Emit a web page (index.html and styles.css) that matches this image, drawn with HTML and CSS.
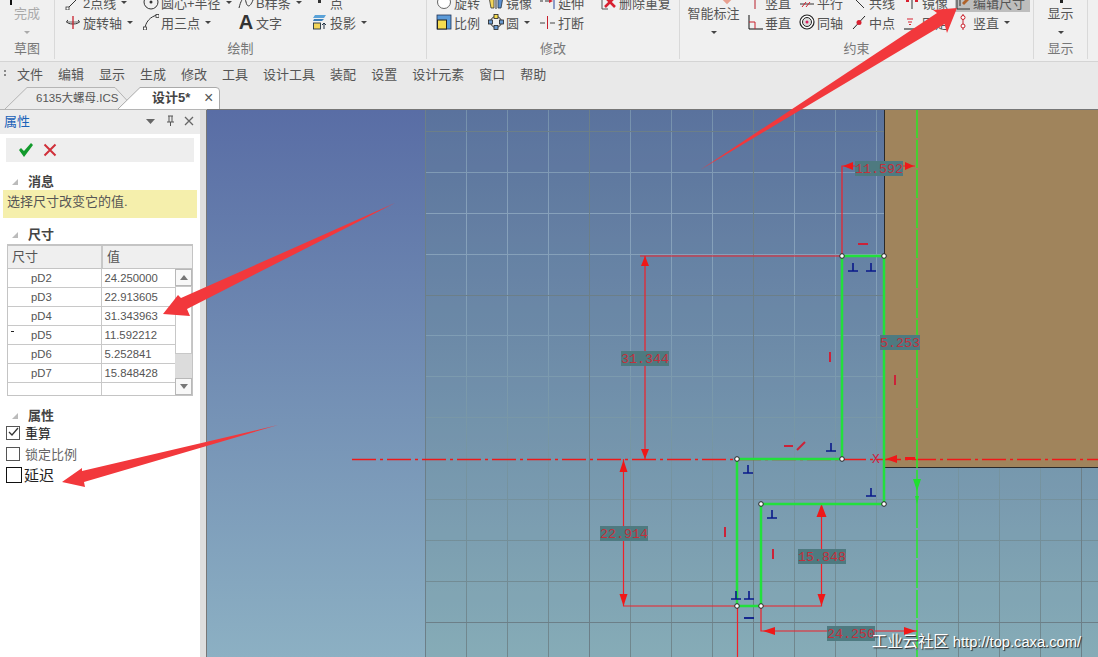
FILE: index.html
```html
<!DOCTYPE html>
<html lang="zh-CN">
<head>
<meta charset="UTF-8" />
<title>CAXA 设计5</title>
<link rel="stylesheet" href="styles.css">
</head>
<body>
  <div class="ribbon">
    <div class="group g-sketch">
      <div class="big-btn off"><span>完成</span><i class="caret"></i></div>
      <div class="group-label">草图</div>
    </div>

    <div class="group g-draw">
      <div class="rows cols-draw">
        <div class="item"><svg class="ico" viewBox="0 0 16 16"><path d="M3 14 14 3" stroke="#333" fill="none"/><rect x="1" y="13" width="3" height="3" fill="#fff" stroke="#333" stroke-width=".8"/></svg>2点线<i class="caret"></i></div>
        <div class="item"><svg class="ico" viewBox="0 0 16 16"><circle cx="8" cy="8" r="7" fill="none" stroke="#333"/><circle cx="8" cy="8" r="1.5" fill="#333"/></svg>圆心+半径<i class="caret"></i></div>
        <div class="item"><svg class="ico" viewBox="0 0 16 16"><path d="M1 14C4 2 7 3 8 8s4 6 7-2" stroke="#333" fill="none"/></svg>B样条<i class="caret"></i></div>
        <div class="item"><svg class="ico" viewBox="0 0 16 16"><rect x="6" y="6" width="3" height="3" fill="#333"/></svg>点</div>
        <div class="item"><svg class="ico" viewBox="0 0 16 16"><path d="M3 6C0 8 3 10 8 10s8-2 5-4" stroke="#333" fill="none"/><path d="M1 8h14" stroke="#333" stroke-width=".7"/><path d="M8 2v13" stroke="#c8202c" stroke-width="1.3"/></svg>旋转轴<i class="caret"></i></div>
        <div class="item"><svg class="ico" viewBox="0 0 16 16"><path d="M2 15C2 9 7 2 15 1" stroke="#333" fill="none"/><rect x="0.5" y="13" width="3" height="3" fill="#fff" stroke="#333" stroke-width=".8"/><rect x="13" y="0.5" width="3" height="3" fill="#fff" stroke="#333" stroke-width=".8"/></svg>用三点<i class="caret"></i></div>
        <div class="item"><span class="big-a">A</span>文字</div>
        <div class="item"><svg class="ico" viewBox="0 0 16 16"><path d="M3 1h11l-2 3H1z" fill="#5aa2d8"/><path d="M2 5h10L10 7H1z" fill="#3b7fb8"/><rect x="1.5" y="9" width="7" height="6" fill="#f3d65a" stroke="#234" stroke-width=".9"/><path d="M12 15V9m-2 2 2-2 2 2" stroke="#234" fill="none"/></svg>投影<i class="caret"></i></div>
      </div>
      <div class="group-label">绘制</div>
    </div>

    <div class="group g-modify">
      <div class="rows cols-modify">
        <div class="item"><svg class="ico" viewBox="0 0 16 16"><circle cx="8" cy="8" r="6.5" fill="#fff" stroke="#666"/></svg>旋转</div>
        <div class="item"><svg class="ico" viewBox="0 0 16 16"><path d="M1 3h5v11H3z" fill="#f3d65a" stroke="#333" stroke-width=".8"/><path d="M10 3h5l-2 11h-3z" fill="#5b8fd0" stroke="#234" stroke-width=".8"/><path d="M8 1v14" stroke="#333"/></svg>镜像</div>
        <div class="item"><svg class="ico" viewBox="0 0 16 16"><path d="M0 7h3m2 0h5" stroke="#333"/><path d="M9 5l4 2-4 2z" fill="#d82030"/><path d="M14 1v14" stroke="#2b4aa0"/></svg>延伸</div>
        <div class="item"><svg class="ico" viewBox="0 0 16 16"><path d="M1 1v14h6" stroke="#555" fill="none"/><path d="M4 3l10 10M14 3 4 13" stroke="#d82030" stroke-width="2.6"/></svg>删除重复</div>
        <div class="item"><svg class="ico" viewBox="0 0 16 16"><rect x="1" y="1" width="14" height="14" fill="#5b9ad8" stroke="#235" stroke-width=".8"/><rect x="1.5" y="6" width="9" height="9" fill="#f6dc50" stroke="#222" stroke-width="1"/></svg>比例</div>
        <div class="item"><svg class="ico" viewBox="0 0 16 16"><circle cx="8" cy="8" r="5.5" fill="none" stroke="#333"/><rect x="6" y="0.5" width="4" height="4" fill="#f6dc50" stroke="#222" stroke-width=".8"/><rect x="0.5" y="6" width="4" height="4" fill="#6a9ad0" stroke="#222" stroke-width=".8"/><rect x="11.5" y="6" width="4" height="4" fill="#6a9ad0" stroke="#222" stroke-width=".8"/><rect x="6" y="11.5" width="4" height="4" fill="#6a9ad0" stroke="#222" stroke-width=".8"/></svg>圆<i class="caret"></i></div>
        <div class="item"><svg class="ico" viewBox="0 0 16 16"><path d="M0 9h5m5 0h5" stroke="#444"/><path d="M7.500 2v13" stroke="#c8202c"/></svg>打断</div>
      </div>
      <div class="group-label">修改</div>
    </div>

    <div class="group g-constraint">
      <div class="big-btn smart"><span>智能标注</span><i class="caret"></i></div>
      <div class="body-side">
        <div class="rows cols-constraint">
          <div class="item"><svg class="ico" viewBox="0 0 16 16"><path d="M8 0v15" stroke="#b8202c"/></svg>竖直</div>
          <div class="item"><svg class="ico" viewBox="0 0 16 16"><path d="M1 10h14" stroke="#333"/><path d="M3 13l4-5m0 5 4-5" stroke="#d82030"/></svg>平行</div>
          <div class="item"><svg class="ico" viewBox="0 0 16 16"><path d="M3 4l10 10" stroke="#333"/></svg>共线</div>
          <div class="item"><svg class="ico" viewBox="0 0 16 16"><path d="M8 0v15" stroke="#333"/><rect x="2" y="3" width="3" height="5" fill="#d82030"/><rect x="11" y="3" width="3" height="5" fill="#d82030"/></svg>镜像</div>
          <div class="item picked"><svg class="ico" viewBox="0 0 16 16"><path d="M2 1v14h13" stroke="#333" fill="none"/><path d="M5 1v11" stroke="#333"/><path d="M7 9l6-6 2 2-6 6z" fill="#b0622a"/></svg>编辑尺寸</div>
          <div class="item"><svg class="ico" viewBox="0 0 16 16"><path d="M2 1v14h14" stroke="#111" fill="none"/><path d="M2 8h6v7" stroke="#c8202c" fill="none"/></svg>垂直</div>
          <div class="item"><svg class="ico" viewBox="0 0 16 16"><circle cx="8" cy="8" r="7" fill="#fff" stroke="#222" stroke-width="1.2"/><circle cx="8" cy="8" r="4.500" fill="#ddd" stroke="#222"/><circle cx="8" cy="8" r="1.500" fill="#d82060"/></svg>同轴</div>
          <div class="item"><svg class="ico" viewBox="0 0 16 16"><path d="M2 15 14 2" stroke="#222"/><circle cx="8" cy="8.500" r="2.500" fill="#d82030"/></svg>中点</div>
          <div class="item"><svg class="ico" viewBox="0 0 16 16"><path d="M0 15h14" stroke="#111"/><path d="M3 5h6M4 8h4M5 10.500h2" stroke="#d82030"/></svg>固定</div>
          <div class="item"><svg class="ico" viewBox="0 0 16 16"><path d="M8 0v16" stroke="#c8202c"/><circle cx="8" cy="3.500" r="2" fill="#fff" stroke="#c8202c"/><circle cx="8" cy="12" r="2" fill="#fff" stroke="#c8202c"/></svg>竖直<i class="caret"></i></div>
        </div>
      </div>
      <div class="group-label">约束</div>
    </div>

    <div class="group g-display">
      <div class="big-btn"><span>显示</span><i class="caret"></i></div>
      <div class="group-label">显示</div>
    </div>
  </div>

  <div class="menubar">
    <span class="grip"></span>
    <span>文件</span><span>编辑</span><span>显示</span><span>生成</span><span>修改</span><span>工具</span><span>设计工具</span><span>装配</span><span>设置</span><span>设计元素</span><span>窗口</span><span>帮助</span>
  </div>

  <div class="tabstrip">
    <div class="tab tab-file">
      <svg class="tab-bg" viewBox="0 0 130 22"><path d="M0 22 22 .5H110L130 22" fill="#ececec" stroke="#b5b5b5"/></svg>
      <span>6135大螺母.ICS</span>
    </div>
    <div class="tab tab-active">
      <svg class="tab-bg" viewBox="0 0 102 22"><path d="M0 22 22 .5H98Q101.500 .5 101.500 4V22" fill="#fff" stroke="#aaa"/></svg>
      <span>设计5*</span><b class="tab-x">×</b>
    </div>
  </div>

  <div class="main">
    <div class="panel">
      <div class="panel-head">
        <span class="panel-title">属性</span>
        <span class="panel-tools">
          <svg width="12" height="12" viewBox="0 0 12 12"><path d="M1 4h9L5.500 9z" fill="#666"/></svg>
          <svg width="12" height="12" viewBox="0 0 12 12"><path d="M4 1h5M5 1v6M8 1v6M3 7h7M6.500 7v4" stroke="#555" fill="none"/></svg>
          <svg width="12" height="12" viewBox="0 0 12 12"><path d="M2 2l8 8M10 2l-8 8" stroke="#666" stroke-width="1.300"/></svg>
        </span>
      </div>

      <div class="okbar">
        <svg width="16" height="16" viewBox="0 0 16 16"><path d="M1 8l2-2 3 3 7-8 2 2-9 12z" fill="#129a2c"/></svg>
        <svg width="14" height="14" viewBox="0 0 14 14"><path d="M1.500 1.500l11 11M12.500 1.500l-11 11" stroke="#d0303a" stroke-width="2"/></svg>
      </div>

      <div class="sec-title sec-msg">消息</div>
      <div class="msg">选择尺寸改变它的值.</div>

      <div class="sec-title sec-dim">尺寸</div>
      <div class="dims">
        <div class="dims-head"><span>尺寸</span><span>值</span></div>
        <div class="dims-body">
          <table class="dims-table">
            <tr><td>pD2</td><td>24.250000</td></tr>
            <tr><td>pD3</td><td>22.913605</td></tr>
            <tr><td>pD4</td><td>31.343963</td></tr>
            <tr class="cur"><td>pD5</td><td>11.592212</td></tr>
            <tr><td>pD6</td><td>5.252841</td></tr>
            <tr><td>pD7</td><td>15.848428</td></tr>
            <tr class="last"><td></td><td></td></tr>
          </table>
          <div class="scroll">
            <div class="sbtn"><i class="up"></i></div>
            <div class="thumb"></div>
            <div class="track"></div>
            <div class="sbtn"><i class="down"></i></div>
          </div>
        </div>
      </div>

      <div class="sec-title sec-prop">属性</div>
      <label class="chk strong"><span class="box on"><svg width="11" height="11" viewBox="0 0 11 11"><path d="M1 5l3 3 6-7" stroke="#333" stroke-width="1.300" fill="none"/></svg></span>重算</label>
      <label class="chk faint"><span class="box"></span>锁定比例</label>
      <label class="chk large"><span class="box"></span>延迟</label>
    </div>

    <div class="splitter"></div>

    <div class="canvas">
      <svg class="sketch" viewBox="207 110 891 547">
        <defs>
          <linearGradient id="minor" gradientUnits="userSpaceOnUse" x1="0" y1="110" x2="0" y2="657">
            <stop offset="0" stop-color="#7590ac"/>
            <stop offset=".2" stop-color="#88a2bc"/>
            <stop offset=".42" stop-color="#7f9db4"/>
            <stop offset=".6" stop-color="#7796a4"/>
            <stop offset="1" stop-color="#70868c"/>
          </linearGradient>
          <path id="perp" d="M-5 4H5M0 4V-4" stroke="#0a1a8a" stroke-width="1.600" fill="none"/>
        </defs>

        <rect x="425" y="110" width="673" height="547" class="grid-tint"/>
        <path stroke="url(#minor)" fill="none" d="M466.500 110V657M507.500 110V657M548.500 110V657M630.500 110V657M671.500 110V657M712.500 110V657M794.500 110V657M835.500 110V657M876.500 110V657M958.500 110V657M999.500 110V657M1040.500 110V657M425 172.500H1098M425 213.500H1098M425 254.500H1098M425 335.500H1098M425 376.500H1098M425 417.500H1098M425 499.500H1098M425 540.500H1098M425 581.500H1098"/>
        <path class="grid-major" d="M425.500 110V657M589.500 110V657M753.500 110V657M1081.500 110V657M425 131.500H1098M425 295.500H1098M425 622.500H1098"/>

        <rect x="885" y="110" width="213" height="357" class="part"/>
        <path class="part-edge" d="M884.500 110V467.500H1098"/>

        <path class="axis-h" d="M352 459.500H1098"/>
        <path class="axis-v" d="M917 110V657"/>

        <path class="dim" d="M842 256V166H915M640 256H842M645 256V459M623.500 459V606M623 606H737M761 606H821.500V504M761 606V631H917M737.500 606V657"/>
        <path class="dim-fill" d="M843 166l10-4v8zM914 166l-9-4v8zM645 256l-4 10h8zM645 459l-4-10h8zM623.500 460l-4 12h8zM623.500 606l-4-12h8zM821.500 504l-5 13h10zM821.500 606l-4-12h8zM763 631l12-4v8zM916 631l-12-4v8zM886 459l11-4v8zM905 457h10v3h-10z"/>
        <path class="mark-green-fill" d="M917 491l-4-12h8zM917 504l-2-8h4z"/>

        <path class="profile" d="M842 256H884V504H761V606H737V459H842Z"/>

        <g class="nodes">
          <circle cx="842" cy="256" r="2.300"/><circle cx="884" cy="256" r="2.300"/>
          <circle cx="737" cy="459" r="2.300"/><circle cx="842" cy="459" r="2.300"/>
          <circle cx="761" cy="504" r="2.300"/><circle cx="884" cy="504" r="2.300"/>
          <circle cx="737" cy="606" r="2.300"/><circle cx="761" cy="606" r="2.300"/>
        </g>

        <use href="#perp" x="853" y="267"/><use href="#perp" x="871" y="267"/>
        <use href="#perp" x="831" y="447"/><use href="#perp" x="748" y="469"/>
        <use href="#perp" x="871" y="492"/><use href="#perp" x="772" y="514"/>
        <use href="#perp" x="736" y="595"/><use href="#perp" x="749" y="595"/>
        <path d="M744 618h10" stroke="#0a1a8a" stroke-width="1.800"/>

        <path class="mark-red" d="M858 244h10M830 352v10M895 375v10M725 527v10M773 549v10M784 446h9M797 450l8-8"/>

        <text x="876" y="463" class="axis-x">X</text>

        <g class="dim-label"><rect x="855" y="161" width="48" height="15"/><text x="855" y="173">11.592</text></g>
        <g class="dim-label"><rect x="880" y="335" width="40" height="15"/><text x="880" y="347">5.253</text></g>
        <g class="dim-label"><rect x="621" y="351" width="48" height="15"/><text x="621" y="363">31.344</text></g>
        <g class="dim-label"><rect x="600" y="526" width="48" height="15"/><text x="600" y="538">22.914</text></g>
        <g class="dim-label"><rect x="798" y="549" width="48" height="15"/><text x="798" y="561">15.848</text></g>
        <g class="dim-label"><rect x="827" y="626" width="48" height="15"/><text x="827" y="638">24.250</text></g>
      </svg>
    </div>
  </div>

  <div class="watermark"><span class="wm-cn">工业云社区</span> http://top.caxa.com/</div>

  <!-- annotation arrows drawn over the whole screenshot -->
  <svg class="arrows" viewBox="0 0 1098 657">
    <path d="M700 170 937 13 933 10 957 8 947 33 944.500 24Z"/>
    <path d="M395 203 181 298 178 295 163 314 190 316 187 309Z"/>
    <path d="M278 425 82 471 82 468 62 482 85 487 84 482Z"/>
  </svg>
</body>
</html>
```

FILE: styles.css
```css
html, body {
  margin: 0;
  height: 100%;
}
body {
  position: relative;
  display: flex;
  flex-direction: column;
  height: 100vh;
  overflow: hidden;
  background-color: #f0f0f0;
  color: #555;
  font-family: "Liberation Sans", "Noto Sans CJK SC", sans-serif;
  font-size: 13px;
}

/* ribbon */
.ribbon {
  display: flex;
  flex: none;
  height: 61px;
  overflow: hidden;
  background-color: #f0f0f0;
  border-bottom: 1px solid #d4d4d4;
}
.group {
  position: relative;
  flex: none;
  height: 59px;
  border-right: 1px solid #d9d9d9;
  box-sizing: border-box;
}
.group-label {
  position: absolute;
  left: 0;
  right: 0;
  bottom: 0;
  text-align: center;
  color: #777;
  line-height: 20px;
}
.g-sketch { width: 55px; }
.g-draw { width: 372px; padding-left: 10px; }
.g-modify { width: 253px; padding-left: 9px; }
.g-constraint { display: flex; width: 354px; padding-left: 7px; }
.g-display { width: 54px; }
.body-side { margin-left: 7px; }

/* bits of the icons above the cropped top edge */
.g-sketch::before {
  content: "";
  position: absolute;
  left: 10px;
  top: 0;
  width: 2px;
  height: 5px;
  background-color: #111;
}
.smart::before {
  content: "";
  position: absolute;
  left: 37px;
  top: -3px;
  width: 6px;
  height: 6px;
  transform: rotate(45deg);
  background-color: #e8a090;
}
.g-display .big-btn::before {
  content: "";
  position: absolute;
  left: 26px;
  top: 0;
  width: 3px;
  height: 3px;
  background-color: #222;
}

.rows {
  display: grid;
  grid-auto-rows: 20px;
  margin-top: -8px;
}
.cols-draw { grid-template-columns: 78px 95px 74px 1fr; }
.cols-modify { grid-template-columns: 52px 52px 61px 1fr; }
.cols-constraint { grid-template-columns: 52px 52px 53px 51px 76px; }
.item {
  display: flex;
  align-items: center;
  gap: 2px;
  white-space: nowrap;
}
.picked {
  background-color: #bdbdbd;
  margin-right: 1px;
}
.ico {
  flex: none;
  width: 16px;
  height: 16px;
}
.big-a {
  width: 16px;
  font-size: 20px;
  font-weight: bold;
  color: #333;
  text-align: center;
}
.caret {
  width: 0;
  height: 0;
  margin-left: 3px;
  border: 3px solid transparent;
  border-top: 3px solid #444;
  border-bottom: 0;
}
.big-btn {
  display: flex;
  flex-direction: column;
  align-items: center;
  gap: 8px;
  padding-top: 5px;
  line-height: 18px;
}
.big-btn .caret { margin-left: 0; }
.big-btn.off { color: #aaa; }
.big-btn.off .caret { border-top-color: #aaa; }
.smart { position: relative; width: 53px; flex: none; }

/* menu and tabs */
.menubar {
  display: flex;
  flex: none;
  align-items: center;
  gap: 15px;
  height: 22px;
  padding: 0 0 3px 17px;
  position: relative;
  background-color: #e9e9e9;
}
.grip {
  position: absolute;
  left: 4px;
  top: 8px;
  width: 2px;
  height: 8px;
  background: repeating-linear-gradient(#888 0 2px, transparent 2px 4px);
}
.tabstrip {
  display: flex;
  flex: none;
  height: 23px;
  padding-left: 5px;
  box-sizing: border-box;
  background-color: #e9e9e9;
  border-bottom: 1px solid #b5b5b5;
}
.tab {
  position: relative;
  height: 22px;
  line-height: 22px;
  white-space: nowrap;
}
.tab span, .tab b { position: relative; }
.tab-bg {
  position: absolute;
  left: 0;
  top: 0;
  width: 100%;
  height: 100%;
  overflow: visible;
}
.tab-file {
  width: 130px;
  padding-left: 31px;
  box-sizing: border-box;
  font-size: 11.500px;
  color: #555;
}
.tab-active {
  width: 102px;
  margin-left: -17px;
  padding-left: 34px;
  box-sizing: border-box;
  font-weight: bold;
  color: #444;
}
.tab-x {
  position: absolute !important;
  left: 86px;
  top: 0;
  font-size: 16px;
  font-weight: normal;
  color: #555;
}

/* properties panel */
.main {
  display: flex;
  flex: 1;
  min-height: 0;
}
.panel {
  flex: none;
  width: 200px;
  background-color: #fff;
}
.splitter {
  flex: none;
  width: 6px;
  background-color: #dedede;
  border-right: 1px solid #777;
}
.panel-head {
  display: flex;
  justify-content: space-between;
  align-items: center;
  height: 21px;
  padding: 0 5px 3px 4px;
  background-color: #ececec;
}
.panel-title { color: #1a62b8; }
.panel-tools {
  display: flex;
  gap: 7px;
}
.okbar {
  display: flex;
  align-items: center;
  gap: 9px;
  height: 24px;
  margin: 4px 6px 0;
  padding-left: 12px;
  background-color: #eeeeee;
}
.sec-title {
  position: relative;
  padding-left: 28px;
  font-weight: bold;
  color: #444;
  line-height: 18px;
}
.sec-title::before {
  content: "";
  position: absolute;
  left: 12px;
  top: 6px;
  border: 3px solid transparent;
  border-right-color: #bbb;
  border-bottom-color: #bbb;
}
.sec-msg { margin: 11px 0 -1px; }
.msg {
  margin: 0 3px;
  height: 28px;
  padding: 3px 4px 0;
  box-sizing: border-box;
  background-color: #f5efac;
  line-height: 18px;
  white-space: nowrap;
}
.sec-dim { margin: 8px 0 -1px; }
.dims {
  margin: 1px 7px 0;
  border: 1px solid #c4c4c4;
  border-top-width: 2px;
}
.dims-head {
  display: grid;
  grid-template-columns: 93px 1fr;
  height: 22px;
  line-height: 22px;
  background-color: #efefef;
  border-bottom: 1px solid #c4c4c4;
}
.dims-head span { padding-left: 4px; }
.dims-head span + span {
  border-left: 2px solid #c8c8c8;
}
.dims-body { display: flex; }
.dims-table {
  flex: 1;
  align-self: flex-start;
  border-collapse: collapse;
  table-layout: fixed;
  font-size: 11.300px;
}
.dims-table td {
  height: 18px;
  padding: 0 0 0 3px;
  border-bottom: 1px solid #c8c8c8;
  white-space: nowrap;
}
.dims-table td:first-child {
  width: 93px;
  padding-left: 23px;
  box-sizing: border-box;
  border-right: 1px solid #c8c8c8;
}
.dims-table .last td {
  height: 12px;
  border-bottom: 0;
}
.cur td:first-child { position: relative; }
.cur td:first-child::before {
  content: "";
  position: absolute;
  left: 3px;
  top: 5px;
  width: 3px;
  height: 1px;
  background-color: #222;
}
.scroll {
  display: flex;
  flex: none;
  flex-direction: column;
  width: 17px;
}
.sbtn {
  display: flex;
  justify-content: center;
  align-items: center;
  flex: none;
  height: 17px;
  box-sizing: border-box;
  border: 1px solid #b8b8b8;
  background-color: #f8f8f8;
}
.sbtn i { border: 4px solid transparent; }
.sbtn .up { border-bottom: 5px solid #777; border-top: 0; }
.sbtn .down { border-top: 5px solid #777; border-bottom: 0; }
.thumb {
  flex: none;
  height: 68px;
  box-sizing: border-box;
  border: 1px solid #c8c8c8;
  background-color: #fff;
}
.track {
  flex: 1;
  background-color: #dcdcdc;
}
.sec-prop { margin: 11px 0 -3px; }
.chk {
  display: flex;
  align-items: center;
  gap: 5px;
  height: 21px;
  padding-left: 6px;
}
.box {
  display: flex;
  justify-content: center;
  align-items: center;
  width: 12px;
  height: 12px;
  flex: none;
  border: 1px solid #555;
}
.strong { color: #222; }
.faint { color: #666; }
.large {
  gap: 2px;
  font-size: 15px;
  color: #222;
}
.large .box {
  width: 14px;
  height: 14px;
  border-color: #111;
}

/* drawing area */
.canvas {
  flex: 1;
  min-width: 0;
  background: linear-gradient(#596da5, #8cb0c3);
  border-top: 1px solid #777;
  margin-top: -1px;
}
.sketch {
  display: block;
  width: 100%;
  height: 100%;
}
.grid-tint { fill: rgba(100, 150, 115, 0.15); }
.grid-major { stroke: #6c7f88; fill: none; }
.part { fill: #a0845c; }
.part-edge { stroke: #2a2a2a; fill: none; }
.axis-h {
  stroke: #f01818;
  stroke-width: 1.500;
  fill: none;
  stroke-dasharray: 24 4 3 4;
}
.axis-v {
  stroke: #20f020;
  stroke-width: 1.400;
  fill: none;
  stroke-dasharray: 28 2;
}
.dim { stroke: #f02028; stroke-width: 1.200; fill: none; }
.dim-fill { fill: #f01818; }
.mark-green-fill { fill: #20e030; }
.mark-red { stroke: #cc2238; stroke-width: 2; fill: none; }
.profile {
  stroke: #22e03c;
  stroke-width: 2.500;
  fill: none;
}
.nodes circle {
  fill: #fff;
  stroke: #222;
}
.axis-x {
  font-family: "Liberation Mono", monospace;
  font-size: 13px;
  fill: #d02040;
  text-anchor: middle;
}
.dim-label rect { fill: #4e7a80; }
.dim-label text {
  font-family: "Liberation Mono", monospace;
  font-size: 13.300px;
  fill: #c2303c;
}

/* overlays */
.watermark {
  position: absolute;
  right: 17px;
  bottom: 6px;
  color: #fff;
  font-size: 14.700px;
  line-height: 18px;
  white-space: nowrap;
  text-shadow: 1px 1px 1px #222;
}
.wm-cn {
  font-size: 15.400px;
}
.arrows {
  position: absolute;
  left: 0;
  top: 0;
  width: 1098px;
  height: 657px;
  pointer-events: none;
}
.arrows path { fill: #f2383c; }
```
